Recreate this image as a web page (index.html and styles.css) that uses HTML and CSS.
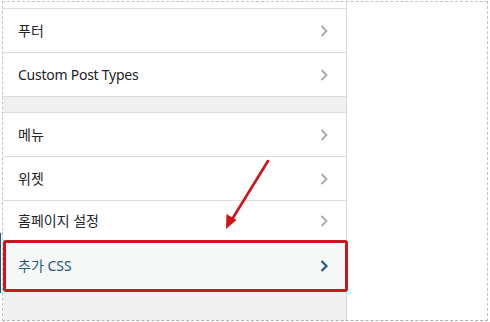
FILE: index.html
```html
<!DOCTYPE html>
<html lang="ko">
<head>
<meta charset="utf-8">
<link rel="stylesheet" href="styles.css">
</head>
<body>
<div class="frame">
  <div class="panel">
    <div class="stub"></div>
    <div class="item"><span>푸터</span><svg class="chev" viewBox="0 0 8 12"><path d="M1.5 1 L6.5 6 L1.5 11"/></svg></div>
    <div class="item"><span class="latin">Custom Post Types</span><svg class="chev" viewBox="0 0 8 12"><path d="M1.5 1 L6.5 6 L1.5 11"/></svg></div>
    <div class="gap"></div>
    <div class="item"><span>메뉴</span><svg class="chev" viewBox="0 0 8 12"><path d="M1.5 1 L6.5 6 L1.5 11"/></svg></div>
    <div class="item"><span>위젯</span><svg class="chev" viewBox="0 0 8 12"><path d="M1.5 1 L6.5 6 L1.5 11"/></svg></div>
    <div class="item short"><span>홈페이지 설정</span><svg class="chev" viewBox="0 0 8 12"><path d="M1.5 1 L6.5 6 L1.5 11"/></svg></div>
    <div class="item active"><span>추가 CSS</span><svg class="chev" viewBox="0 0 8 12"><path d="M1.5 1 L6.5 6 L1.5 11"/></svg></div>
    <div class="rest"></div>
  </div>
  <svg class="arrow" viewBox="0 0 490 322" width="490" height="322">
    <line x1="268" y1="161" x2="231" y2="221"/>
    <path class="head" d="M226 229 L226.5 214 L236.5 220 Z"/>
  </svg>
</div>
</body>
</html>
```
FILE: styles.css
```css
html, body {
  margin: 0;
  padding: 0;
  background: #ffffff;
}
body {
  width: 490px;
  height: 322px;
  overflow: hidden;
  font-family: "Noto Sans", "Noto Sans CJK KR", sans-serif;
  font-size: 14px;
  color: #1d2327;
}
.frame {
  position: relative;
  box-sizing: border-box;
  margin: 1px 0 0 2px;
  width: 486px;
  height: 320px;
  border: 1px dashed #c3c4c7;
  border-bottom-color: #b0b0b0;
}
.panel {
  box-sizing: border-box;
  width: 344px;
  height: 100%;
  border-right: 1px solid #dcdcde;
  display: flex;
  flex-direction: column;
  background: #ffffff;
}
.stub {
  height: 6px;
  border-bottom: 1px solid #dcdcde;
  flex: none;
}
.item {
  flex: none;
  box-sizing: border-box;
  height: 44px;
  padding: 0 18px 0 15px;
  border-bottom: 1px solid #dcdcde;
  display: flex;
  align-items: center;
  justify-content: space-between;
  background: #ffffff;
}
.item span {
  line-height: 20px;
}
.item .latin {
  letter-spacing: -0.25px;
}
.item.short {
  height: 40px;
}
.chev {
  width: 8px;
  height: 12px;
  fill: none;
  stroke: #a7aaad;
  stroke-width: 1.8;
}
.gap {
  flex: none;
  height: 15px;
  background: #f0f0f1;
  border-bottom: 1px solid #dcdcde;
}
.item.active {
  position: relative;
  height: 52px;
  margin: -1px -2px 0 0;
  padding: 0 17px 0 12px;
  background: #f6f7f7;
  border: 3.5px solid #c9161f;
  border-radius: 3px;
  color: #1e5b80;
}
.item.active::before {
  content: "";
  position: absolute;
  left: -7px;
  top: -10px;
  width: 2px;
  height: 60px;
  background: #2a4f7a;
}
.item.active .chev {
  stroke: #1e5b80;
  stroke-width: 2.2;
}
.rest {
  flex: 1;
  background: #f0f0f1;
}
.arrow {
  position: absolute;
  left: -3px;
  top: -2px;
  pointer-events: none;
}
.arrow line {
  stroke: #d0121b;
  stroke-width: 2.6;
  stroke-linecap: round;
}
.arrow .head {
  fill: #d0121b;
}
```
